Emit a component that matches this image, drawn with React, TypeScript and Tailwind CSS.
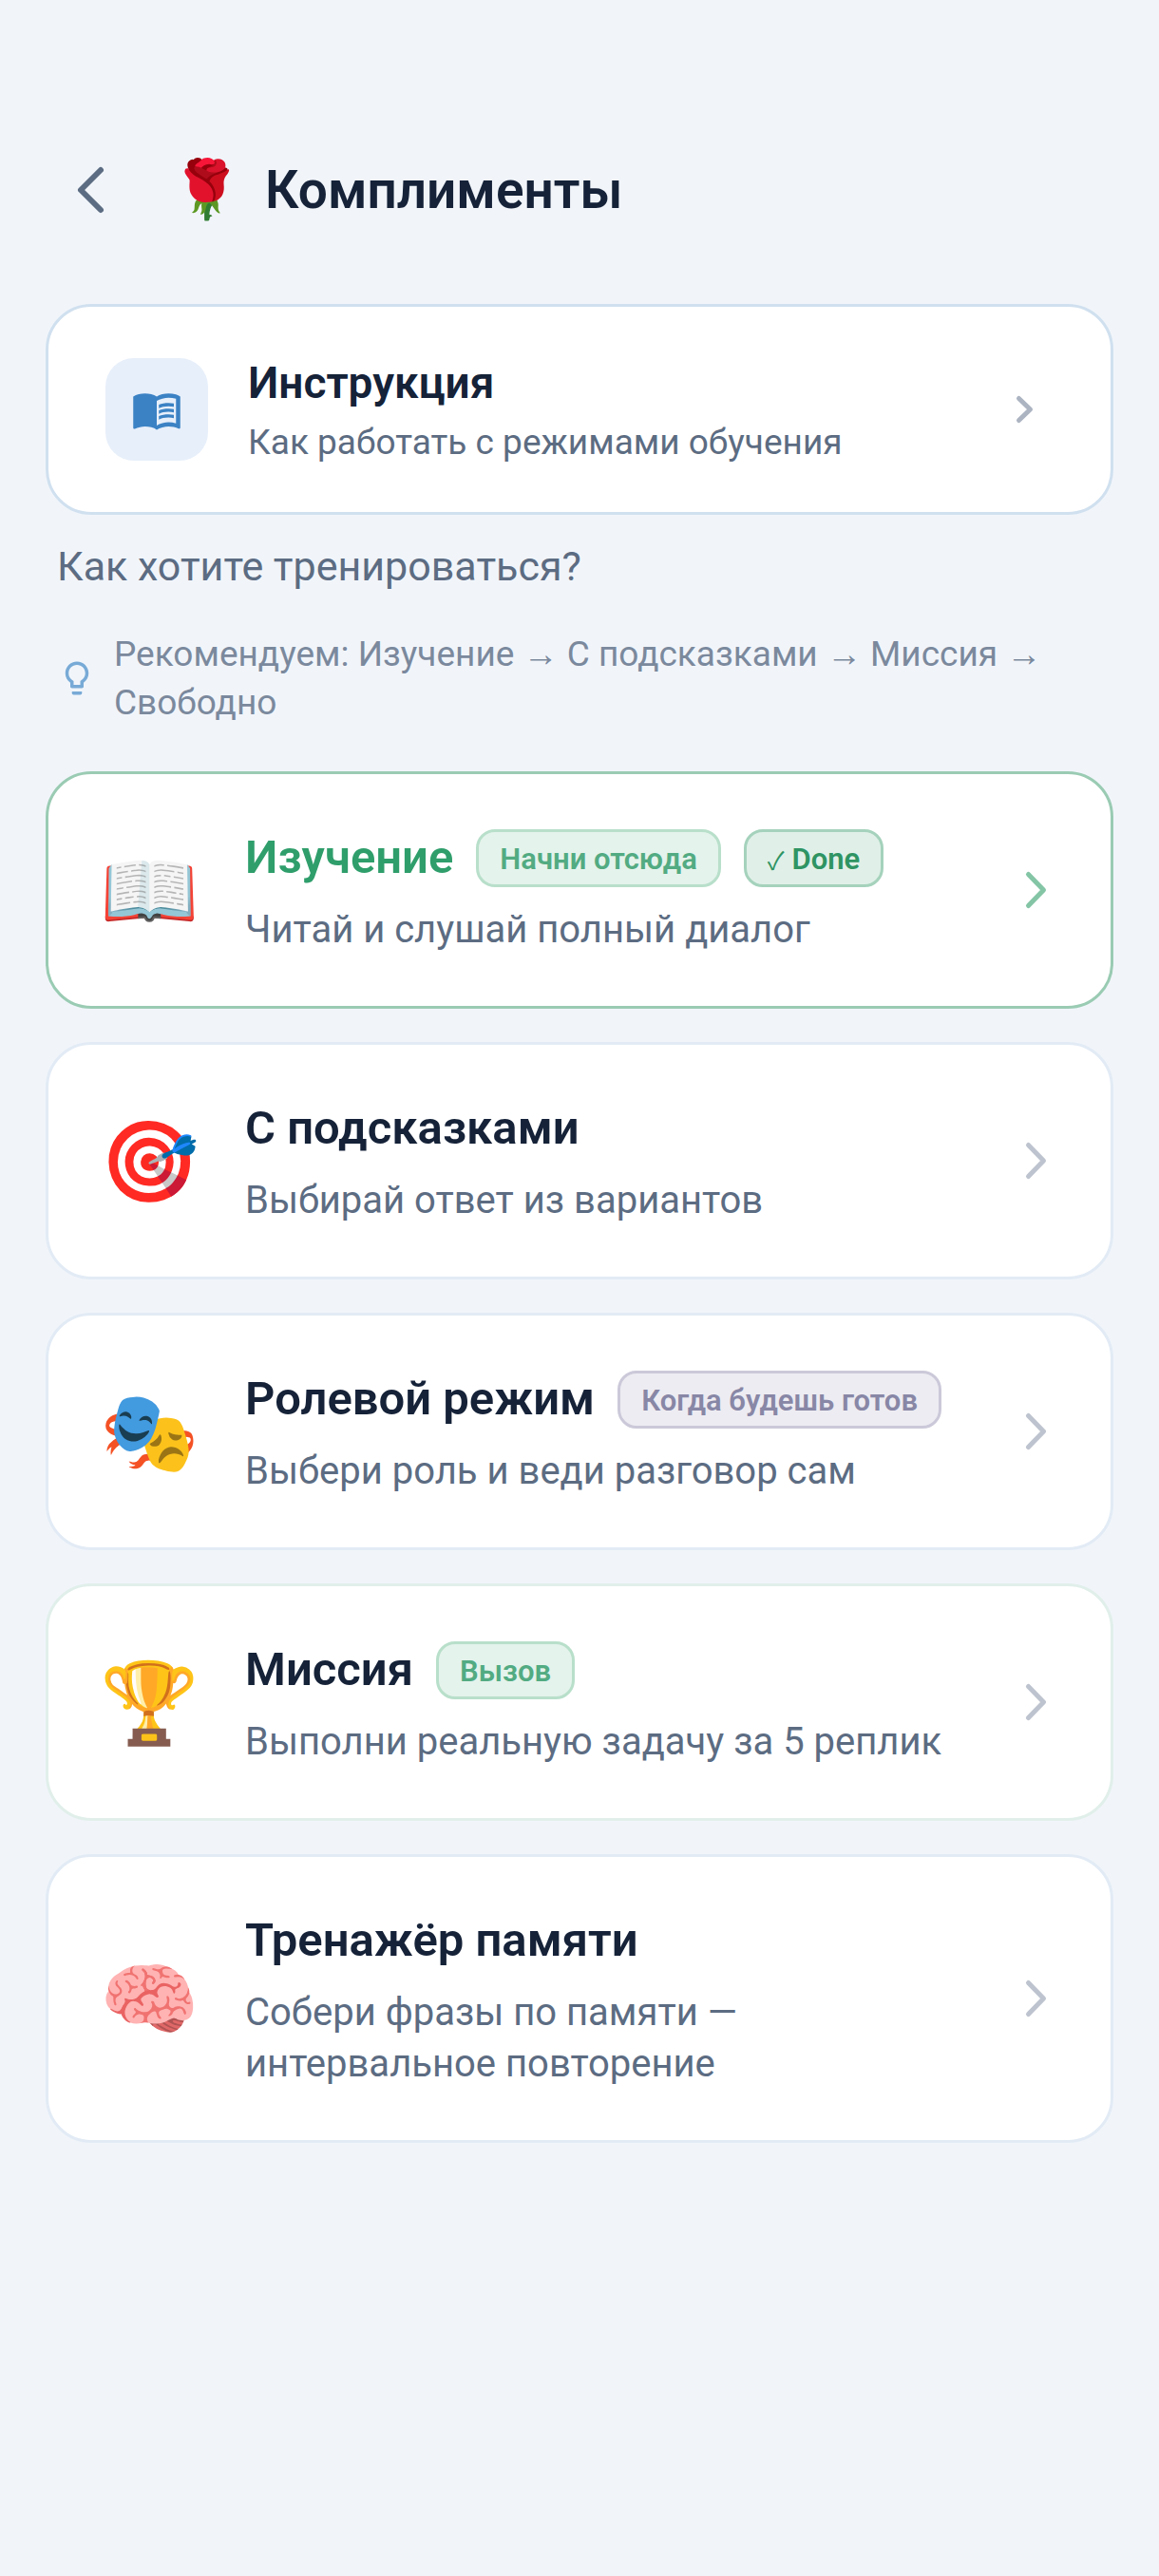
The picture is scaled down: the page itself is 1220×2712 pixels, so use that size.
import React from 'react';
import { MdMenuBook, MdLightbulbOutline } from 'react-icons/md';

interface Badge {
  label: string;
  done?: boolean;
  className: string;
}

interface Mode {
  id: string;
  emoji: string;
  title: string;
  description: string;
  badges?: Badge[];
  border: string;
  titleColor: string;
  arrow: string;
}

const GREEN_BADGE = 'bg-[#e4f3ec] border-[#b8dfca] text-[#52ab82]';

const MODES: Mode[] = [
  {
    id: 'study',
    emoji: '📖',
    title: 'Изучение',
    description: 'Читай и слушай полный диалог',
    badges: [
      { label: 'Начни отсюда', className: GREEN_BADGE },
      { label: 'Done', done: true, className: 'bg-[#e0f0e8] border-[#a5d2bc] text-[#2e9463]' },
    ],
    border: 'border-[#9acbb3]',
    titleColor: 'text-[#2f9e6b]',
    arrow: 'text-[#84c5a6]',
  },
  {
    id: 'hints',
    emoji: '🎯',
    title: 'С подсказками',
    description: 'Выбирай ответ из вариантов',
    border: 'border-[#e2ebf5]',
    titleColor: 'text-[#152238]',
    arrow: 'text-[#bec4cf]',
  },
  {
    id: 'role',
    emoji: '🎭',
    title: 'Ролевой режим',
    description: 'Выбери роль и веди разговор сам',
    badges: [{ label: 'Когда будешь готов', className: 'bg-[#edecf2] border-[#cbc9d9] text-[#8887a6]' }],
    border: 'border-[#e2ebf5]',
    titleColor: 'text-[#152238]',
    arrow: 'text-[#bec4cf]',
  },
  {
    id: 'mission',
    emoji: '🏆',
    title: 'Миссия',
    description: 'Выполни реальную задачу за 5 реплик',
    badges: [{ label: 'Вызов', className: GREEN_BADGE }],
    border: 'border-[#e1efea]',
    titleColor: 'text-[#152238]',
    arrow: 'text-[#bec4cf]',
  },
  {
    id: 'memory',
    emoji: '🧠',
    title: 'Тренажёр памяти',
    description: 'Собери фразы по памяти — интервальное повторение',
    border: 'border-[#e2ebf5]',
    titleColor: 'text-[#152238]',
    arrow: 'text-[#bec4cf]',
  },
];

function ModeCard({ mode }: { mode: Mode }) {
  return (
    <button
      type="button"
      className={`flex w-full items-center rounded-[48px] border-[3px] bg-white px-[54px] py-[53px] text-left cursor-pointer ${mode.border}`}
    >
      <span className="w-[105px] shrink-0 pt-1 text-center text-[84px] leading-[96px]">{mode.emoji}</span>
      <span className="ml-12 min-w-0 flex-1">
        <span className="flex h-[70px] items-center gap-6">
          <span className={`text-[49px] font-semibold leading-[60px] whitespace-nowrap ${mode.titleColor}`}>
            {mode.title}
          </span>
          {mode.badges?.map((badge) => (
            <span
              key={badge.label}
              className={`flex h-[61px] items-center gap-2 rounded-[20px] border-[3px] px-[22px] pt-1 text-[31px] font-semibold leading-[40px] whitespace-nowrap ${badge.className}`}
            >
              {badge.done && <span className="font-['Noto_Sans_CJK_JP',sans-serif] text-[26px] font-normal">✓</span>}
              {badge.label}
            </span>
          ))}
        </span>
        <span className="mt-3.5 block max-w-[760px] text-[40px] leading-[54px] text-[#5c6c82]">{mode.description}</span>
      </span>
      <svg viewBox="0 0 48 48" className={`size-12 shrink-0 ${mode.arrow}`} fill="none" stroke="currentColor" strokeWidth="5" strokeLinecap="round" strokeLinejoin="round">
        <path d="M15.5 7.5 31.5 24l-16 16.5" />
      </svg>
    </button>
  );
}

export default function App() {
  return (
    <div className="min-h-screen bg-[#f1f5fa] px-12 pt-[152px] pb-24 font-['Roboto','Noto_Sans',sans-serif]">
      {/* Header */}
      <header className="flex items-center">
        <button type="button" aria-label="Назад" className="size-24 shrink-0 cursor-pointer text-[#5c6c82]">
          <svg viewBox="0 0 96 96" className="size-24" fill="none" stroke="currentColor" strokeWidth="6" strokeLinecap="round" strokeLinejoin="round">
            <path d="M58 27 37 48l21 21" />
          </svg>
        </button>
        <span className="ml-9 text-[60px] leading-[72px]">🌹</span>
        <h1 className="ml-6 text-[55px] font-semibold leading-[64px] text-[#152238]">Комплименты</h1>
      </header>

      <main>
        {/* Instructions */}
        <button
          type="button"
          className="mt-[72px] flex w-full items-center rounded-[48px] border-[3px] border-[#d0e0ef] bg-white p-[54px] pl-[60px] text-left cursor-pointer"
        >
          <span className="flex size-[108px] shrink-0 items-center justify-center rounded-[30px] bg-[#e7effa]">
            <MdMenuBook className="size-[54px] text-[#3b82c4]" />
          </span>
          <span className="ml-[42px] min-w-0 flex-1">
            <span className="block text-[46px] font-semibold leading-[52px] text-[#152238]">Инструкция</span>
            <span className="mt-[18px] block text-[37px] leading-[38px] text-[#5c6c82]">Как работать с режимами обучения</span>
          </span>
          <svg viewBox="0 0 72 72" className="size-[72px] shrink-0 text-[#acb4c2]" fill="none" stroke="currentColor" strokeWidth="5" strokeLinecap="round" strokeLinejoin="round">
            <path d="M29.5 24.5 41.5 36l-12 11.5" />
          </svg>
        </button>

        {/* Recommended order */}
        <h2 className="mt-7 px-3 text-[43px] leading-[52px] text-[#5c6c82]">Как хотите тренироваться?</h2>
        <div className="mt-[41px] flex items-center gap-[18px] px-3">
          <MdLightbulbOutline className="size-[42px] shrink-0 text-[#78aad6]" />
          <p className="text-[37px] leading-[51px] text-[#7b899d]">
            Рекомендуем: Изучение → С подсказками → Миссия → Свободно
          </p>
        </div>

        {/* Training modes */}
        <div className="mt-[47px] flex flex-col gap-[35px]">
          {MODES.map((mode) => (
            <ModeCard key={mode.id} mode={mode} />
          ))}
        </div>
      </main>
    </div>
  );
}
